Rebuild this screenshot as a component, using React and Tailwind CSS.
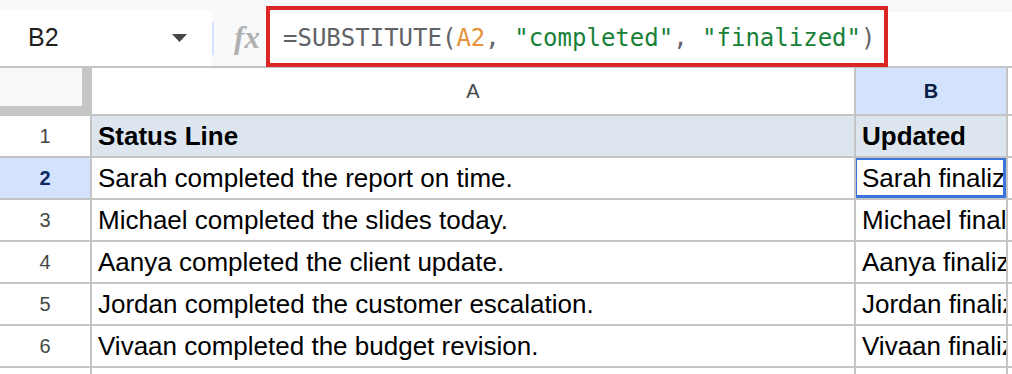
import React from "react";

const rows = [
  ["Sarah completed the report on time.", "Sarah finalized the report on time."],
  ["Michael completed the slides today.", "Michael finalized the slides today."],
  ["Aanya completed the client update.", "Aanya finalized the client update."],
  ["Jordan completed the customer escalation.", "Jordan finalized the customer escalation."],
  ["Vivaan completed the budget revision.", "Vivaan finalized the budget revision."],
];

function Toolbar() {
  return (
    <div className="flex h-[68px] border-b-2 border-[#c4c4c4] bg-[#f8f9fa]">
      <div className="mt-[10px] flex w-[212px] items-center bg-white pl-[28px] pr-[25px]">
        <span className="flex-1 text-[25px] text-[#1f1f1f]">B2</span>
        <svg width="15" height="8" viewBox="0 0 15 8">
          <path d="M0 0 L15 0 L7.5 8 Z" fill="#444746" />
        </svg>
      </div>
      <div className="mt-[22px] h-[33px] w-[2px] bg-[#d3e3fd]" />
      <div className="mt-[10px] flex w-[52px] items-center justify-center pl-[14px]">
        <span className="font-['Liberation_Serif',serif] text-[31px] font-bold italic text-[#b0b0b0]">
          fx
        </span>
      </div>
      <div className="relative mt-[12px] flex-1 bg-white">
        <div className="absolute left-0 top-[-6px] flex h-[61px] w-[622px] items-center border-4 border-[#dc2626] pt-[3px] pl-[13px] font-['DejaVu_Sans_Mono',monospace] text-[24px] whitespace-pre">
          <span className="text-[#5f6368]">=SUBSTITUTE(</span>
          <span className="text-[#e69138]">A2</span>
          <span className="text-[#5f6368]">, </span>
          <span className="text-[#188038]">"completed"</span>
          <span className="text-[#5f6368]">, </span>
          <span className="text-[#188038]">"finalized"</span>
          <span className="text-[#5f6368]">)</span>
        </div>
      </div>
    </div>
  );
}

function ColumnHeaders() {
  return (
    <div className="flex h-[48px]">
      <div className="flex w-[92px] flex-col bg-[#c4c7c5]">
        <div className="h-[38px] w-[82px] bg-[#f8f9fa]" />
      </div>
      <div className="flex w-[764px] items-center justify-center border-r-2 border-b-2 border-[#c4c4c4] bg-white text-[20px] text-[#444746]">
        A
      </div>
      <div className="flex w-[152px] items-center justify-center border-r-2 border-b-2 border-[#c4c4c4] bg-[#d3e3fd] text-[20px] font-bold text-[#0b1f44]">
        B
      </div>
      <div className="flex-1 border-b-2 border-[#c4c4c4] bg-white" />
    </div>
  );
}

function Row({ num, a, b, header, selected }) {
  return (
    <div className="flex h-[42px]">
      <div
        className={
          selected
            ? "flex w-[92px] items-center justify-center border-r-2 border-b-2 border-[#c4c4c4] bg-[#d3e3fd] text-[20px] font-bold text-[#0b2a63]"
            : "flex w-[92px] items-center justify-center border-r-2 border-b-2 border-[#c4c4c4] bg-white text-[20px] text-[#444746]"
        }
      >
        {num}
      </div>
      <div
        className={
          header
            ? "flex w-[764px] items-center overflow-hidden border-r-2 border-b-2 border-[#c4c4c4] bg-[#dde6ef] pl-[6px] text-[26px] font-bold whitespace-nowrap text-black"
            : "flex w-[764px] items-center overflow-hidden border-r-2 border-b-2 border-[#c4c4c4] bg-white pl-[6px] text-[26px] whitespace-nowrap text-black"
        }
      >
        {a}
      </div>
      <div
        className={
          header
            ? "relative flex w-[152px] items-center overflow-hidden border-r-2 border-b-2 border-[#c4c4c4] bg-[#dde6ef] pl-[6px] text-[26px] font-bold whitespace-nowrap text-black"
            : "relative flex w-[152px] items-center overflow-hidden border-r-2 border-b-2 border-[#c4c4c4] bg-white pl-[6px] text-[26px] whitespace-nowrap text-black"
        }
      >
        {b}
        {selected && (
          <div className="absolute left-[-2px] top-[-1px] h-[41px] w-[152px] border-[3px] border-[#3b74dc]" />
        )}
      </div>
      <div className="flex-1 border-b-2 border-[#c4c4c4] bg-white" />
    </div>
  );
}

export default function App() {
  return (
    <div className="h-[374px] w-[1012px] overflow-hidden bg-white font-['Liberation_Sans',Arial,sans-serif]">
      <Toolbar />
      <ColumnHeaders />
      <Row num="1" a="Status Line" b="Updated" header />
      {rows.map((r, i) => (
        <Row key={i} num={String(i + 2)} a={r[0]} b={r[1]} selected={i === 0} />
      ))}
      <div className="flex h-[20px]">
        <div className="w-[92px] border-r-2 border-[#c4c4c4]" />
        <div className="w-[764px] border-r-2 border-[#c4c4c4]" />
        <div className="w-[152px] border-r-2 border-[#c4c4c4]" />
      </div>
    </div>
  );
}
